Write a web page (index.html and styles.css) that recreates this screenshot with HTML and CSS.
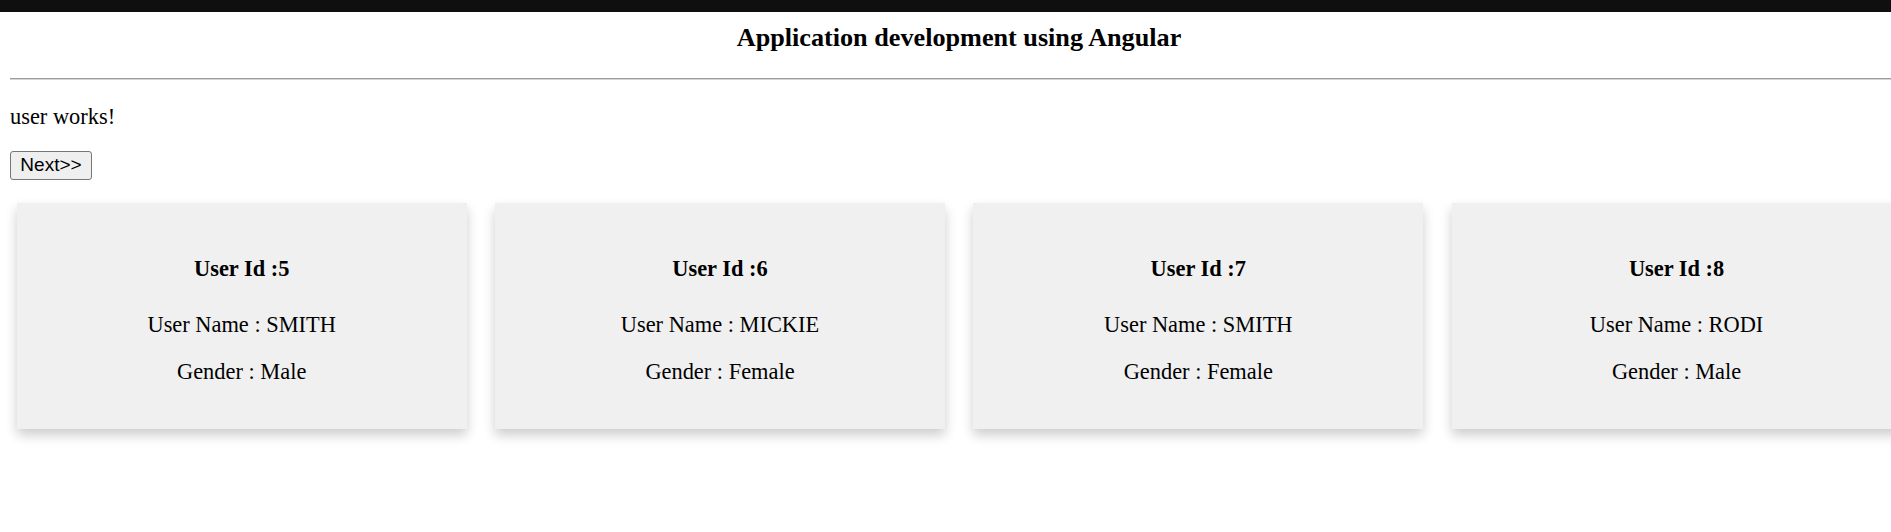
FILE: index.html
```html
<!DOCTYPE html>
<html lang="en">
<head>
<meta charset="utf-8">
<title>Application development using Angular</title>
<link rel="stylesheet" href="styles.css">
</head>
<body>
<div class="topbar"></div>
<div class="page">
  <h3 class="title">Application development using Angular</h3>
  <hr class="rule">
  <p class="status">user works!</p>
  <div class="actions"><button class="next-btn" type="button">Next&gt;&gt;</button></div>
  <div class="cards">
    <div class="card">
      <h4 class="card-id">User Id :5</h4>
      <p class="card-line">User Name : SMITH</p>
      <p class="card-line">Gender : Male</p>
    </div>
    <div class="card">
      <h4 class="card-id">User Id :6</h4>
      <p class="card-line">User Name : MICKIE</p>
      <p class="card-line">Gender : Female</p>
    </div>
    <div class="card">
      <h4 class="card-id">User Id :7</h4>
      <p class="card-line">User Name : SMITH</p>
      <p class="card-line">Gender : Female</p>
    </div>
    <div class="card">
      <h4 class="card-id">User Id :8</h4>
      <p class="card-line">User Name : RODI</p>
      <p class="card-line">Gender : Male</p>
    </div>
  </div>
</div>
</body>
</html>
```
FILE: styles.css
```css
html {
  overflow: hidden;
}

html, body {
  margin: 0;
  padding: 0;
  background: #ffffff;
}

body {
  font-family: "Liberation Serif", "Times New Roman", serif;
  color: #000;
}

.topbar {
  height: 12px;
  background: #0f0f0f;
}

.page {
  width: 1898px;
  padding: 0 0 60px 10px;
}

.title {
  margin: 11px 0 25px;
  font-size: 26.2px;
  line-height: 30px;
  font-weight: bold;
  text-align: center;
}

.rule {
  margin: 0;
  height: 0;
  border: 0;
  border-top: 1px solid #9c9c9c;
  border-bottom: 1px solid #d4d4d4;
}

.status {
  margin: 24px 0 21.4px;
  font-size: 22.4px;
  line-height: 25.6px;
}

.actions {
  display: flex;
}

.next-btn {
  box-sizing: border-box;
  width: 82px;
  height: 29px;
  padding: 0;
  font-family: "Liberation Sans", Arial, sans-serif;
  font-size: 19px;
  color: #000;
  background: #efefef;
  border: 1.4px solid #767676;
  border-radius: 3px;
}

.cards {
  display: flex;
  gap: 28.3px;
  margin-top: 23px;
  padding-left: 6.7px;
}

.card {
  flex: 0 0 450px;
  box-sizing: border-box;
  padding: 23px 0 23px;
  background: #f0f0f0;
  box-shadow: 0 5.6px 11.2px 0 rgba(0, 0, 0, 0.2);
  text-align: center;
}

.card-id {
  margin: 30px 0;
  font-size: 22.4px;
  line-height: 26px;
  font-weight: bold;
}

.card-line {
  margin: 21px 0;
  font-size: 22.4px;
  line-height: 26px;
}
```
